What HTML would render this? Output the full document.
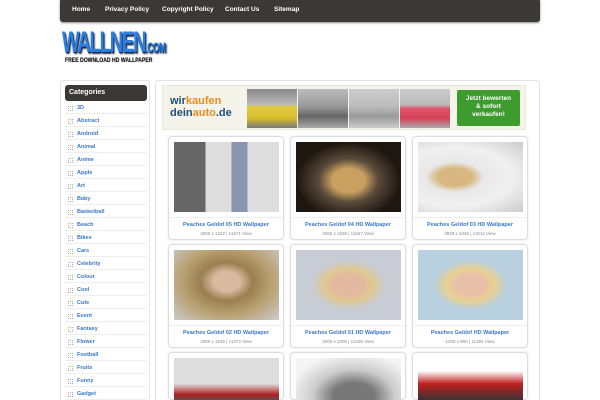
<!DOCTYPE html>
<html><head><meta charset="utf-8"><style>
*{margin:0;padding:0;box-sizing:border-box}
html{width:600px;height:400px;overflow:hidden}
body{width:600px;height:400px;overflow:hidden;background:#fff;font-family:"Liberation Sans",sans-serif;position:relative}
.nav{position:absolute;left:60px;top:0;width:480px;height:22px;background:#3d3838;border-radius:0 0 3px 3px;box-shadow:0 1px 2px #888}
.nav span{position:absolute;top:6px;color:#fff;font-size:6.5px;font-weight:bold}
.logo{position:absolute;left:62px;top:29px;width:112px;height:40px;overflow:hidden}
.logo .big{font-family:"Liberation Sans";font-weight:bold;font-size:30px;color:#2a7fe0;letter-spacing:-2px;text-shadow:1px 1px 0 #0a2a66,2px 2px 2px #333;line-height:28px;transform:scaleX(0.62);transform-origin:0 0;white-space:nowrap}
.logo .big small{font-size:14px;letter-spacing:-1px}
.logo .sub{position:absolute;left:3px;top:29px;font-size:6px;font-weight:bold;color:#111;white-space:nowrap;transform:scaleX(0.85);transform-origin:0 0;text-shadow:0 0 1px #888}
.side{position:absolute;left:60px;top:80px;width:90px;height:330px;border:1px solid #e3e3e3;border-radius:3px}
.cath{position:absolute;left:65px;top:85px;width:82px;height:16px;background:#3d3838;border-radius:3px;color:#fff;font-size:7px;font-weight:bold;padding:4px 0 0 4px}
.cat{position:absolute;left:65px;width:82px;height:13px;border-bottom:1px solid #eee;font-size:5.5px;font-weight:bold;color:#3a78c8;padding:4px 0 0 12px}
.cat:before{content:"";position:absolute;left:3px;top:5px;width:3px;height:3px;border:1px dotted #aaa}
.main{position:absolute;left:155px;top:80px;width:385px;height:330px;border:1px solid #e3e3e3;border-radius:3px}
.ad{position:absolute;left:162px;top:85px;width:364px;height:45px;background:#f5f4ea;border:1px solid #e8e6d8}
.ad .t{position:absolute;left:7px;top:9px;font-size:11px;font-weight:bold;line-height:12px;color:#1f4d7a}
.ad .t b{color:#f08a1c}
.car{position:absolute;top:3px;width:50px;height:39px}
.btn{position:absolute;left:294px;top:4px;width:63px;height:36px;background:#3e9b2d;border-radius:2px;color:#fff;font-size:6.5px;font-weight:bold;text-align:center;line-height:8px;padding-top:5px}
.card{position:absolute;width:116px;height:104px;border:1px solid #ddd;border-radius:4px;background:#fff;box-shadow:0 0 2px #e5e5e5}
.card .im{position:absolute;left:5px;top:5px;width:105px;height:70px}
.card .ti{position:absolute;left:0;right:0;top:85px;text-align:center;font-size:5.5px;font-weight:bold;color:#3a78c8}
.card .me{position:absolute;left:0;right:0;top:94px;text-align:center;font-size:4.5px;color:#888}
.card:after{content:"";position:absolute;left:0;right:0;top:80px;border-top:1px solid #eee}
</style></head><body>
<div class="nav"><span style="left:12px">Home</span><span style="left:45px">Privacy Policy</span><span style="left:102px">Copyright Policy</span><span style="left:165px">Contact Us</span><span style="left:214px">Sitemap</span></div>
<div class="logo"><div class="big">WALLNEN<small>.COM</small></div><div class="sub">FREE DOWNLOAD HD WALLPAPER</div></div>
<div class="side"></div>
<div class="cath">Categories</div>
<div class="cat" style="top:101px">3D</div><div class="cat" style="top:114px">Abstract</div><div class="cat" style="top:127px">Android</div><div class="cat" style="top:140px">Animal</div><div class="cat" style="top:153px">Anime</div><div class="cat" style="top:166px">Apple</div><div class="cat" style="top:179px">Art</div><div class="cat" style="top:192px">Baby</div><div class="cat" style="top:205px">Basketball</div><div class="cat" style="top:218px">Beach</div><div class="cat" style="top:231px">Bikes</div><div class="cat" style="top:244px">Cars</div><div class="cat" style="top:257px">Celebrity</div><div class="cat" style="top:270px">Colour</div><div class="cat" style="top:283px">Cool</div><div class="cat" style="top:296px">Cute</div><div class="cat" style="top:309px">Event</div><div class="cat" style="top:322px">Fantasy</div><div class="cat" style="top:335px">Flower</div><div class="cat" style="top:348px">Football</div><div class="cat" style="top:361px">Fruits</div><div class="cat" style="top:374px">Funny</div><div class="cat" style="top:387px">Gadget</div>
<div class="main"></div>
<div class="ad"><div class="t">wir<b>kaufen</b><br>dein<b>auto</b>.de</div>
<div class="car" style="left:84px;background:linear-gradient(#888,#bbb 40%,#e0c940 45%,#d6be2a 75%,#777)"></div>
<div class="car" style="left:135px;background:linear-gradient(#bbb,#999 45%,#666 70%,#aaa)"></div>
<div class="car" style="left:186px;background:linear-gradient(#ccc,#bbb 45%,#999 70%,#ccc)"></div>
<div class="car" style="left:237px;background:linear-gradient(#ccc,#bbb 40%,#e0556a 50%,#d84058 75%,#aaa)"></div>
<div class="btn">Jetzt bewerten<br>&amp; sofort<br>verkaufen!</div></div>

<div class="card" style="left:168px;top:136px"><div class="im" style="background:linear-gradient(90deg,#666 0 30%,#ddd 30% 55%,#8b95b0 55% 70%,#ddd 70%)"></div><div class="ti">Peaches Geldof 05 HD Wallpaper</div><div class="me">2000 x 1332 | 11671 View</div></div>
<div class="card" style="left:290px;top:136px"><div class="im" style="background:radial-gradient(ellipse at 50% 55%,#c9a060 0 22%,#5a4a3a 40%,#1e1710 70%)"></div><div class="ti">Peaches Geldof 04 HD Wallpaper</div><div class="me">2560 x 1536 | 11547 View</div></div>
<div class="card" style="left:412px;top:136px"><div class="im" style="background:radial-gradient(ellipse at 35% 50%,#d8b880 0 18%,#e8e8e8 30%,#f0f0f0 60%,#ccc)"></div><div class="ti">Peaches Geldof 03 HD Wallpaper</div><div class="me">3828 x 2436 | 11512 View</div></div>

<div class="card" style="left:168px;top:244px"><div class="im" style="background:radial-gradient(ellipse at 50% 45%,#d9b9a0 0 18%,#9a8050 35%,#b8a070 60%,#ccc)"></div><div class="ti">Peaches Geldof 02 HD Wallpaper</div><div class="me">2560 x 1536 | 11474 View</div></div>
<div class="card" style="left:290px;top:244px"><div class="im" style="background:radial-gradient(ellipse at 50% 50%,#e2b8a0 0 20%,#e0c890 32%,#c8ccd4 50%)"></div><div class="ti">Peaches Geldof 01 HD Wallpaper</div><div class="me">2000 x 1000 | 11435 View</div></div>
<div class="card" style="left:412px;top:244px"><div class="im" style="background:radial-gradient(ellipse at 50% 50%,#e8c0a8 0 20%,#e8d090 32%,#b8d0e0 50%)"></div><div class="ti">Peaches Geldof HD Wallpaper</div><div class="me">1200 x 800 | 11391 View</div></div>

<div class="card" style="left:168px;top:352px;height:48px"><div class="im" style="height:43px;background:linear-gradient(#ddd 0 60%,#b02020 85%,#555)"></div></div>
<div class="card" style="left:290px;top:352px;height:48px"><div class="im" style="height:43px;background:radial-gradient(ellipse at 55% 90%,#777 0 25%,#ccc 50%,#f4f4f4 80%)"></div></div>
<div class="card" style="left:412px;top:352px;height:48px"><div class="im" style="height:43px;background:linear-gradient(#fff 0 30%,#c02020 60%,#333)"></div></div>
</body></html>
